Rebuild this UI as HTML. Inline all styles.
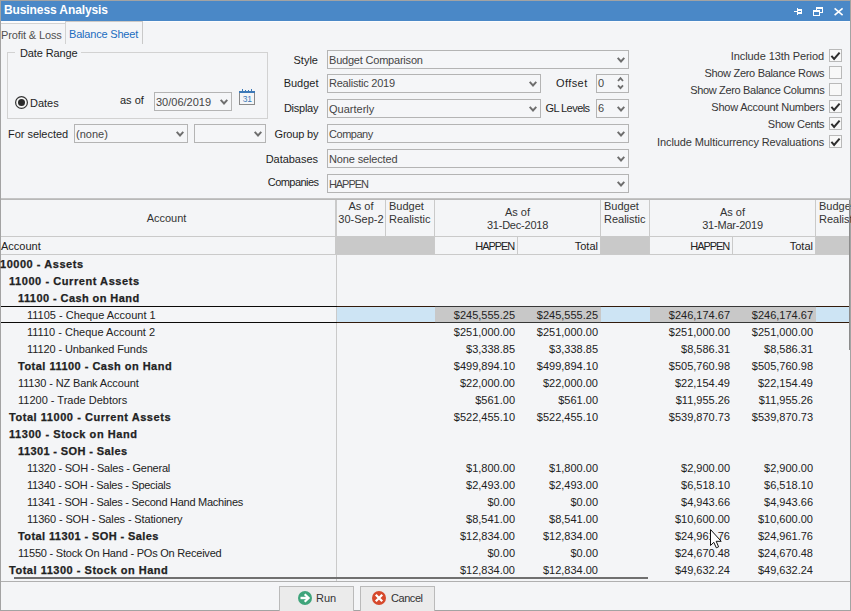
<!DOCTYPE html>
<html><head><meta charset="utf-8"><style>
*{margin:0;padding:0;box-sizing:border-box}
html,body{width:851px;height:611px;overflow:hidden;background:#f4f5f7;font-family:"Liberation Sans",sans-serif;font-size:11px;color:#1e1e1e}
div,span{position:absolute;white-space:pre}
.t{line-height:13px}
.r{text-align:right}
.cb{border:1px solid #b4b4b4;background:#f5f6f8}
.ct{left:1px;top:3px;line-height:13px;color:#454545}
.chk{width:13px;height:13px;border:1px solid #b9b9b9;background:#f8f8f8}
.hl{height:1px;background:#cacaca}
.vl{width:1px;background:#cacaca}
.acc{line-height:13px;color:#222}
.b{font-weight:bold;font-size:11px;-webkit-text-stroke:0.25px #222}
.num{line-height:13px;text-align:right;color:#222}
svg{position:absolute;overflow:visible}
</style></head><body>
<div style="left:0;top:0;width:851px;height:611px;border:1px solid #a3a3a3"></div>
<div style="left:1px;top:1px;width:849px;height:20px;background:#4a88c7"></div>
<div class="t" style="left:4px;top:3px;letter-spacing:-0.1px;color:#fff;font-weight:bold;font-size:12px;line-height:14px">Business Analysis</div>
<svg style="left:0;top:0" width="851" height="30"><rect x="794" y="11" width="3" height="1" fill="#fff"/><rect x="797" y="8" width="1" height="7" fill="#fff"/><rect x="798" y="9" width="4" height="5" fill="#fff"/><rect x="798" y="11" width="3" height="1" fill="#4a88c7"/><rect x="816" y="7" width="7" height="2" fill="#fff"/><rect x="822" y="9" width="1" height="4" fill="#fff"/><rect x="820" y="12" width="3" height="1" fill="#fff"/><rect x="816" y="9" width="1" height="1" fill="#fff"/><rect x="813" y="10" width="7" height="2" fill="#fff"/><rect x="813" y="12" width="1" height="4" fill="#fff"/><rect x="819" y="12" width="1" height="4" fill="#fff"/><rect x="813" y="15" width="7" height="1" fill="#fff"/><path d="M834.6 8.4 L842.6 15.2 M842.6 8.4 L834.6 15.2" fill="none" stroke="#fff" stroke-width="1.6"/></svg>
<div style="left:1px;top:21px;width:849px;height:1px;background:#fcfcfd"></div>
<div style="left:1px;top:22px;width:64px;height:1px;background:#fcfcfd"></div>
<div style="left:1px;top:23px;width:64px;height:1px;background:#d2d2d2"></div>
<div style="left:65px;top:21px;width:78px;height:1px;background:#cdc9c6"></div>
<div style="left:65px;top:21px;width:1px;height:23px;background:#d2d2d2"></div>
<div style="left:142px;top:21px;width:1px;height:23px;background:#c9c9c9"></div>
<div class="t" style="left:1px;top:29px;letter-spacing:-0.125px;color:#505050">Profit &amp; Loss</div>
<div class="t" style="left:69px;top:28px;letter-spacing:-0.192px;color:#1a6cc0">Balance Sheet</div>
<div style="left:7px;top:52px;width:261px;height:67px;border:1px solid #d2d2d2"></div>
<div style="left:15px;top:47px;width:66px;height:10px;background:#f4f5f7"></div>
<div class="t" style="left:20px;top:47px;letter-spacing:-0.111px;">Date Range</div>
<svg style="left:15px;top:96px" width="13" height="13"><circle cx="6.5" cy="6.5" r="5.9" fill="#f8f8f8" stroke="#333" stroke-width="1.2"/><circle cx="6.5" cy="6.5" r="3.5" fill="#2a2a2a"/></svg>
<div class="t" style="left:30px;top:97px;">Dates</div>
<div class="t" style="left:120px;top:94px;">as of</div>
<div class="cb" style="left:154px;top:92px;width:78px;height:19px"><div class="ct" style="">30/06/2019</div></div>
<svg style="left:219.5px;top:99.4px" width="8" height="6"><path d="M0.7 0.9 L4 4.5 L7.3 0.9" fill="none" stroke="#6e6e6e" stroke-width="1.9"/></svg>
<svg style="left:239px;top:89px" width="17" height="17"><rect x="0" y="2" width="16" height="2" fill="#3d79b7"/><rect x="3" y="0" width="1" height="2" fill="#3d79b7"/><rect x="12" y="0" width="1" height="2" fill="#3d79b7"/><rect x="6" y="1" width="1" height="1" fill="#3d79b7"/><rect x="9" y="1" width="1" height="1" fill="#3d79b7"/><rect x="0" y="4" width="1" height="12" fill="#8a8a8a"/><rect x="15" y="4" width="1" height="12" fill="#8a8a8a"/><rect x="0" y="15" width="16" height="1" fill="#8a8a8a"/><text x="8.2" y="13" font-family="Liberation Sans" font-size="8.5" fill="#3d79b7" text-anchor="middle" letter-spacing="-0.3">31</text></svg>
<div class="t" style="left:8px;top:128px;letter-spacing:-0.036px;">For selected</div>
<div class="cb" style="left:74px;top:124px;width:114px;height:19px"><div class="ct" style="">(none)</div></div>
<svg style="left:175.5px;top:131.4px" width="8" height="6"><path d="M0.7 0.9 L4 4.5 L7.3 0.9" fill="none" stroke="#6e6e6e" stroke-width="1.9"/></svg>
<div class="cb" style="left:194px;top:124px;width:72px;height:19px"><div class="ct" style=""></div></div>
<svg style="left:253.5px;top:131.4px" width="8" height="6"><path d="M0.7 0.9 L4 4.5 L7.3 0.9" fill="none" stroke="#6e6e6e" stroke-width="1.9"/></svg>
<div class="t r" style="left:18px;top:54px;width:300px;">Style</div>
<div class="cb" style="left:327px;top:50px;width:302px;height:19px"><div class="ct" style="letter-spacing:-0.206px;">Budget Comparison</div></div>
<svg style="left:616.5px;top:57.4px" width="8" height="6"><path d="M0.7 0.9 L4 4.5 L7.3 0.9" fill="none" stroke="#6e6e6e" stroke-width="1.9"/></svg>
<div class="t r" style="left:18.5px;top:77px;width:300px;">Budget</div>
<div class="cb" style="left:327px;top:74px;width:214px;height:19px"><div class="ct" style="letter-spacing:-0.231px;top:2px;">Realistic 2019</div></div>
<svg style="left:528.5px;top:81.4px" width="8" height="6"><path d="M0.7 0.9 L4 4.5 L7.3 0.9" fill="none" stroke="#6e6e6e" stroke-width="1.9"/></svg>
<div class="t r" style="left:287.6px;top:77px;width:300px;letter-spacing:0.4px;">Offset</div>
<div class="cb" style="left:596px;top:74px;width:33px;height:19px"><div class="ct" style="top:2px;">0</div></div>
<svg style="left:617px;top:76px" width="8" height="15"><path d="M1 5 L3.5 2.2 L6 5 M1 9.3 L3.5 12.1 L6 9.3" fill="none" stroke="#6e6e6e" stroke-width="1.8"/></svg>
<div class="t r" style="left:18.25px;top:102px;width:300px;letter-spacing:-0.25px;">Display</div>
<div class="cb" style="left:327px;top:99px;width:214px;height:19px"><div class="ct" style="">Quarterly</div></div>
<svg style="left:528.5px;top:106.4px" width="8" height="6"><path d="M0.7 0.9 L4 4.5 L7.3 0.9" fill="none" stroke="#6e6e6e" stroke-width="1.9"/></svg>
<div class="t r" style="left:289.55px;top:102px;width:300px;letter-spacing:-0.55px;">GL Levels</div>
<div class="cb" style="left:596px;top:99px;width:33px;height:19px"><div class="ct" style="top:2px;">6</div></div>
<svg style="left:616.5px;top:106.4px" width="8" height="6"><path d="M0.7 0.9 L4 4.5 L7.3 0.9" fill="none" stroke="#6e6e6e" stroke-width="1.9"/></svg>
<div class="t r" style="left:18.2px;top:128px;width:300px;letter-spacing:-0.2px;">Group by</div>
<div class="cb" style="left:327px;top:124px;width:302px;height:19px"><div class="ct" style="letter-spacing:-0.467px;">Company</div></div>
<svg style="left:616.5px;top:131.4px" width="8" height="6"><path d="M0.7 0.9 L4 4.5 L7.3 0.9" fill="none" stroke="#6e6e6e" stroke-width="1.9"/></svg>
<div class="t r" style="left:18.025px;top:153px;width:300px;letter-spacing:-0.025px;">Databases</div>
<div class="cb" style="left:327px;top:149px;width:302px;height:19px"><div class="ct" style="letter-spacing:-0.142px;">None selected</div></div>
<svg style="left:616.5px;top:156.4px" width="8" height="6"><path d="M0.7 0.9 L4 4.5 L7.3 0.9" fill="none" stroke="#6e6e6e" stroke-width="1.9"/></svg>
<div class="t r" style="left:18.537px;top:176px;width:300px;letter-spacing:-0.537px;">Companies</div>
<div class="cb" style="left:327px;top:174px;width:302px;height:19px"><div class="ct" style="letter-spacing:-1.08px;">HAPPEN</div></div>
<svg style="left:616.5px;top:181.4px" width="8" height="6"><path d="M0.7 0.9 L4 4.5 L7.3 0.9" fill="none" stroke="#6e6e6e" stroke-width="1.9"/></svg>
<div class="t r" style="left:524.078px;top:50px;width:300px;letter-spacing:-0.078px;color:#363636">Include 13th Period</div>
<div class="chk" style="left:829px;top:49px"></div>
<svg style="left:829px;top:49px" width="13" height="13"><path d="M2.4 6.9 L5.1 9.9 L10.6 3.6" fill="none" stroke="#2e2e2e" stroke-width="2"/></svg>
<div class="t r" style="left:524.305px;top:67px;width:300px;letter-spacing:-0.305px;color:#363636">Show Zero Balance Rows</div>
<div class="chk" style="left:829px;top:66px"></div>
<div class="t r" style="left:524.333px;top:84px;width:300px;letter-spacing:-0.333px;color:#363636">Show Zero Balance Columns</div>
<div class="chk" style="left:829px;top:83px"></div>
<div class="t r" style="left:524.226px;top:101px;width:300px;letter-spacing:-0.226px;color:#363636">Show Account Numbers</div>
<div class="chk" style="left:829px;top:100px"></div>
<svg style="left:829px;top:100px" width="13" height="13"><path d="M2.4 6.9 L5.1 9.9 L10.6 3.6" fill="none" stroke="#2e2e2e" stroke-width="2"/></svg>
<div class="t r" style="left:524.289px;top:118px;width:300px;letter-spacing:-0.289px;color:#363636">Show Cents</div>
<div class="chk" style="left:829px;top:117px"></div>
<svg style="left:829px;top:117px" width="13" height="13"><path d="M2.4 6.9 L5.1 9.9 L10.6 3.6" fill="none" stroke="#2e2e2e" stroke-width="2"/></svg>
<div class="t r" style="left:524.106px;top:136px;width:300px;letter-spacing:-0.106px;color:#363636">Include Multicurrency Revaluations</div>
<div class="chk" style="left:829px;top:135px"></div>
<svg style="left:829px;top:135px" width="13" height="13"><path d="M2.4 6.9 L5.1 9.9 L10.6 3.6" fill="none" stroke="#2e2e2e" stroke-width="2"/></svg>
<div style="left:1px;top:198px;width:849px;height:1px;background:#c4c4c4"></div>
<div style="left:1px;top:199px;width:849px;height:1px;background:#b8b8b8"></div>
<div class="hl" style="left:1px;top:236px;width:849px"></div>
<div class="hl" style="left:1px;top:254px;width:849px"></div>
<div style="left:335px;top:236px;width:100px;height:18px;background:#c9c9c9"></div>
<div style="left:600px;top:236px;width:50px;height:18px;background:#c9c9c9"></div>
<div style="left:815px;top:236px;width:34px;height:18px;background:#c9c9c9"></div>
<div class="vl" style="left:335px;top:200px;height:36px"></div>
<div class="vl" style="left:336px;top:200px;height:36px"></div>
<div class="vl" style="left:385px;top:200px;height:36px"></div>
<div class="vl" style="left:434px;top:200px;height:36px"></div>
<div class="vl" style="left:600px;top:200px;height:36px"></div>
<div class="vl" style="left:649px;top:200px;height:36px"></div>
<div class="vl" style="left:815px;top:200px;height:36px"></div>
<div class="vl" style="left:434px;top:237px;height:17px"></div>
<div class="vl" style="left:517px;top:237px;height:17px"></div>
<div class="vl" style="left:600px;top:237px;height:17px"></div>
<div class="vl" style="left:649px;top:237px;height:17px"></div>
<div class="vl" style="left:732px;top:237px;height:17px"></div>
<div class="vl" style="left:815px;top:237px;height:17px"></div>
<div class="vl" style="left:336px;top:255px;height:326px"></div>
<div class="t" style="left:1px;top:212px;width:331px;text-align:center;color:#333">Account</div>
<div class="t" style="left:337px;top:200px;width:48px;text-align:center;color:#333">As of
30-Sep-2</div>
<div class="t" style="left:389px;top:200px;color:#333">Budget
Realistic</div>
<div class="t" style="left:435px;top:206px;width:165px;text-align:center;color:#333">As of</div>
<div class="t" style="left:435px;top:219px;width:165px;text-align:center;letter-spacing:-0.22px;color:#333">31-Dec-2018</div>
<div class="t" style="left:604px;top:200px;color:#333">Budget
Realistic</div>
<div class="t" style="left:650px;top:206px;width:165px;text-align:center;color:#333">As of</div>
<div class="t" style="left:650px;top:219px;width:165px;text-align:center;letter-spacing:-0.22px;color:#333">31-Mar-2019</div>
<div class="t" style="left:819px;top:200px;color:#333">Budget
Realistic</div>
<div class="t" style="left:1px;top:240px;color:#222">Account</div>
<div class="t r" style="left:214.08px;top:240px;width:300px;letter-spacing:-1.08px;color:#222">HAPPEN</div>
<div class="t r" style="left:298px;top:240px;width:300px;color:#222">Total</div>
<div class="t r" style="left:429.08px;top:240px;width:300px;letter-spacing:-1.08px;color:#222">HAPPEN</div>
<div class="t r" style="left:513px;top:240px;width:300px;color:#222">Total</div>
<div class="acc b" style="left:0px;top:258px;letter-spacing:0.538px;">10000 - Assets</div>
<div class="acc b" style="left:9px;top:275px;letter-spacing:0.562px;">11000 - Current Assets</div>
<div class="acc b" style="left:18px;top:292px;letter-spacing:0.421px;">11100 - Cash on Hand</div>
<div style="left:337px;top:307px;width:512px;height:15px;background:#cde4f4"></div>
<div style="left:435px;top:307px;width:166px;height:15px;background:#c8c8c8"></div>
<div style="left:650px;top:307px;width:166px;height:15px;background:#c8c8c8"></div>
<div style="left:1px;top:306px;width:336px;height:1px;background:#0b0a08"></div>
<div style="left:337px;top:306px;width:98px;height:1px;background:#321b0c"></div>
<div style="left:435px;top:306px;width:166px;height:1px;background:#373737"></div>
<div style="left:601px;top:306px;width:49px;height:1px;background:#321b0c"></div>
<div style="left:650px;top:306px;width:166px;height:1px;background:#373737"></div>
<div style="left:816px;top:306px;width:33px;height:1px;background:#321b0c"></div>
<div style="left:1px;top:322px;width:336px;height:1px;background:#0b0a08"></div>
<div style="left:337px;top:322px;width:98px;height:1px;background:#321b0c"></div>
<div style="left:435px;top:322px;width:166px;height:1px;background:#373737"></div>
<div style="left:601px;top:322px;width:49px;height:1px;background:#321b0c"></div>
<div style="left:650px;top:322px;width:166px;height:1px;background:#373737"></div>
<div style="left:816px;top:322px;width:33px;height:1px;background:#321b0c"></div>
<div class="acc" style="left:27px;top:309px;">11105 - Cheque Account 1</div>
<div class="num r" style="left:425px;top:309px;width:90px;">$245,555.25</div>
<div class="num r" style="left:508px;top:309px;width:90px;">$245,555.25</div>
<div class="num r" style="left:640px;top:309px;width:90px;">$246,174.67</div>
<div class="num r" style="left:723px;top:309px;width:90px;">$246,174.67</div>
<div class="acc" style="left:27px;top:326px;letter-spacing:0.009px;">11110 - Cheque Account 2</div>
<div class="num r" style="left:425px;top:326px;width:90px;">$251,000.00</div>
<div class="num r" style="left:508px;top:326px;width:90px;">$251,000.00</div>
<div class="num r" style="left:640px;top:326px;width:90px;">$251,000.00</div>
<div class="num r" style="left:723px;top:326px;width:90px;">$251,000.00</div>
<div class="acc" style="left:27px;top:343px;letter-spacing:-0.1px;">11120 - Unbanked Funds</div>
<div class="num r" style="left:425px;top:343px;width:90px;">$3,338.85</div>
<div class="num r" style="left:508px;top:343px;width:90px;">$3,338.85</div>
<div class="num r" style="left:640px;top:343px;width:90px;">$8,586.31</div>
<div class="num r" style="left:723px;top:343px;width:90px;">$8,586.31</div>
<div class="acc b" style="left:18px;top:360px;letter-spacing:0.48px;">Total 11100 - Cash on Hand</div>
<div class="num r" style="left:425px;top:360px;width:90px;">$499,894.10</div>
<div class="num r" style="left:508px;top:360px;width:90px;">$499,894.10</div>
<div class="num r" style="left:640px;top:360px;width:90px;">$505,760.98</div>
<div class="num r" style="left:723px;top:360px;width:90px;">$505,760.98</div>
<div class="acc" style="left:18px;top:377px;letter-spacing:-0.136px;">11130 - NZ Bank Account</div>
<div class="num r" style="left:425px;top:377px;width:90px;">$22,000.00</div>
<div class="num r" style="left:508px;top:377px;width:90px;">$22,000.00</div>
<div class="num r" style="left:640px;top:377px;width:90px;">$22,154.49</div>
<div class="num r" style="left:723px;top:377px;width:90px;">$22,154.49</div>
<div class="acc" style="left:18px;top:394px;">11200 - Trade Debtors</div>
<div class="num r" style="left:425px;top:394px;width:90px;">$561.00</div>
<div class="num r" style="left:508px;top:394px;width:90px;">$561.00</div>
<div class="num r" style="left:640px;top:394px;width:90px;">$11,955.26</div>
<div class="num r" style="left:723px;top:394px;width:90px;">$11,955.26</div>
<div class="acc b" style="left:9px;top:411px;letter-spacing:0.548px;">Total 11000 - Current Assets</div>
<div class="num r" style="left:425px;top:411px;width:90px;">$522,455.10</div>
<div class="num r" style="left:508px;top:411px;width:90px;">$522,455.10</div>
<div class="num r" style="left:640px;top:411px;width:90px;">$539,870.73</div>
<div class="num r" style="left:723px;top:411px;width:90px;">$539,870.73</div>
<div class="acc b" style="left:9px;top:428px;letter-spacing:0.56px;">11300 - Stock on Hand</div>
<div class="acc b" style="left:18px;top:445px;letter-spacing:0.389px;">11301 - SOH - Sales</div>
<div class="acc" style="left:27px;top:462px;letter-spacing:-0.225px;">11320 - SOH - Sales - General</div>
<div class="num r" style="left:425px;top:462px;width:90px;">$1,800.00</div>
<div class="num r" style="left:508px;top:462px;width:90px;">$1,800.00</div>
<div class="num r" style="left:640px;top:462px;width:90px;">$2,900.00</div>
<div class="num r" style="left:723px;top:462px;width:90px;">$2,900.00</div>
<div class="acc" style="left:27px;top:479px;letter-spacing:-0.276px;">11340 - SOH - Sales - Specials</div>
<div class="num r" style="left:425px;top:479px;width:90px;">$2,493.00</div>
<div class="num r" style="left:508px;top:479px;width:90px;">$2,493.00</div>
<div class="num r" style="left:640px;top:479px;width:90px;">$6,518.10</div>
<div class="num r" style="left:723px;top:479px;width:90px;">$6,518.10</div>
<div class="acc" style="left:27px;top:496px;letter-spacing:-0.268px;">11341 - SOH - Sales - Second Hand Machines</div>
<div class="num r" style="left:425px;top:496px;width:90px;">$0.00</div>
<div class="num r" style="left:508px;top:496px;width:90px;">$0.00</div>
<div class="num r" style="left:640px;top:496px;width:90px;">$4,943.66</div>
<div class="num r" style="left:723px;top:496px;width:90px;">$4,943.66</div>
<div class="acc" style="left:27px;top:513px;letter-spacing:-0.142px;">11360 - SOH - Sales - Stationery</div>
<div class="num r" style="left:425px;top:513px;width:90px;">$8,541.00</div>
<div class="num r" style="left:508px;top:513px;width:90px;">$8,541.00</div>
<div class="num r" style="left:640px;top:513px;width:90px;">$10,600.00</div>
<div class="num r" style="left:723px;top:513px;width:90px;">$10,600.00</div>
<div class="acc b" style="left:18px;top:530px;letter-spacing:0.404px;">Total 11301 - SOH - Sales</div>
<div class="num r" style="left:425px;top:530px;width:90px;">$12,834.00</div>
<div class="num r" style="left:508px;top:530px;width:90px;">$12,834.00</div>
<div class="num r" style="left:640px;top:530px;width:90px;">$24,961.76</div>
<div class="num r" style="left:723px;top:530px;width:90px;">$24,961.76</div>
<div class="acc" style="left:18px;top:547px;letter-spacing:-0.218px;">11550 - Stock On Hand - POs On Received</div>
<div class="num r" style="left:425px;top:547px;width:90px;">$0.00</div>
<div class="num r" style="left:508px;top:547px;width:90px;">$0.00</div>
<div class="num r" style="left:640px;top:547px;width:90px;">$24,670.48</div>
<div class="num r" style="left:723px;top:547px;width:90px;">$24,670.48</div>
<div class="acc b" style="left:9px;top:564px;letter-spacing:0.519px;">Total 11300 - Stock on Hand</div>
<div class="num r" style="left:425px;top:564px;width:90px;">$12,834.00</div>
<div class="num r" style="left:508px;top:564px;width:90px;">$12,834.00</div>
<div class="num r" style="left:640px;top:564px;width:90px;">$49,632.24</div>
<div class="num r" style="left:723px;top:564px;width:90px;">$49,632.24</div>
<div style="left:14px;top:577px;width:634px;height:2px;background:#707070"></div>
<div style="left:1px;top:581px;width:849px;height:1px;background:#b0b0b0"></div>
<div style="left:849px;top:200px;width:1px;height:150px;background:#8c8c8c"></div>
<div style="left:279px;top:586px;width:75px;height:25px;border:1px solid #bababa;border-bottom:none;background:#ebebeb"></div>
<div style="left:360px;top:586px;width:75px;height:25px;border:1px solid #bababa;border-bottom:none;background:#ebebeb"></div>
<svg style="left:298px;top:591px" width="14" height="14"><circle cx="7" cy="7" r="7" fill="#3fa47b"/><path d="M2.5 7 H10" stroke="#fff" stroke-width="2.4"/><path d="M6.7 3.3 L10.6 7 L6.7 10.7" fill="none" stroke="#fff" stroke-width="2.2"/></svg>
<div class="t" style="left:316px;top:592px;color:#333">Run</div>
<svg style="left:372px;top:591px" width="14" height="14"><circle cx="7" cy="7" r="7" fill="#d6492c"/><path d="M3.8 3.8 L10.2 10.2 M10.2 3.8 L3.8 10.2" fill="none" stroke="#fff" stroke-width="2.3"/></svg>
<div class="t" style="left:391px;top:592px;color:#333;letter-spacing:-0.45px">Cancel</div>
<svg style="left:710px;top:529px" width="14" height="20"><path d="M0.5 0.5 L0.5 16.5 L3.8 13.3 L6.3 18.8 L8.6 17.8 L6.2 12.3 L11.2 12.3 Z" fill="#fff" stroke="#111" stroke-width="1" stroke-linejoin="miter"/></svg>
</body></html>
